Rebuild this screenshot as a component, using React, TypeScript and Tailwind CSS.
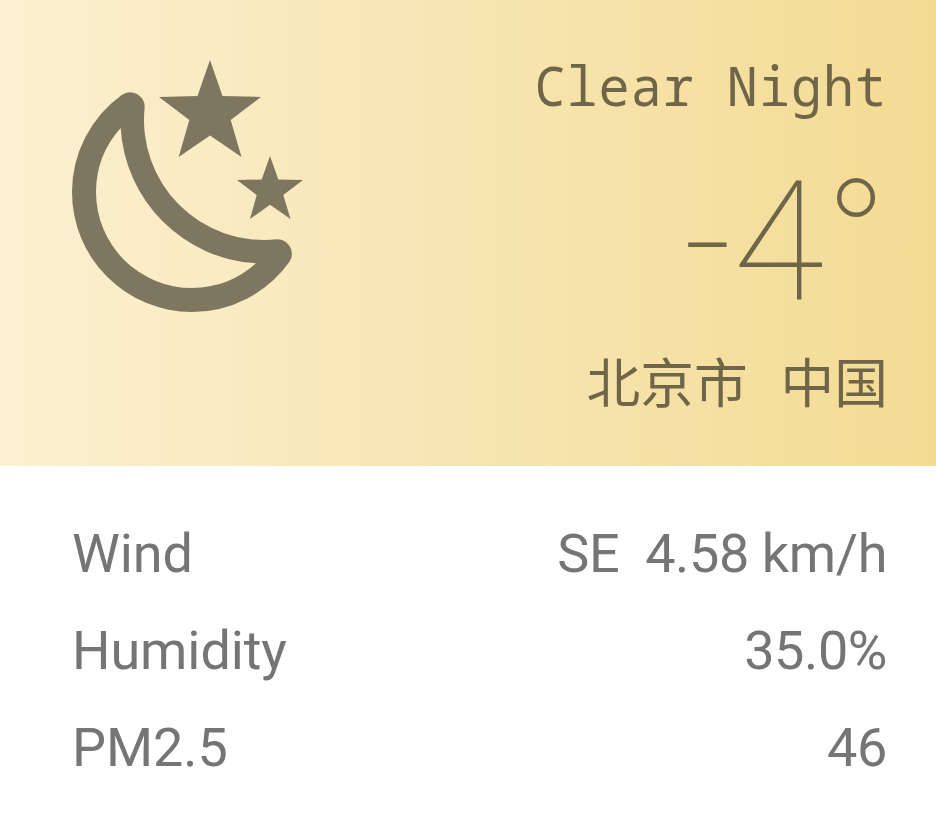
const rows = [
  { label: "Wind", value: "SE\u00a0 4.58 km/h" },
  { label: "Humidity", value: "35.0%" },
  { label: "PM2.5", value: "46" },
];

function NightIcon() {
  return (
    <svg width="240" height="256" viewBox="68 60 240 256" fill="#7f7660" className="ml-[68px] mt-[60px] shrink-0">
      <path
        fillRule="evenodd"
        d="M121.700 95A14.600 14.600 0 0 1 144.700 107A120 120 0 0 0 277 239.300A14.600 14.600 0 0 1 289.500 261.800A120 120 0 0 1 192 312A120 120 0 0 1 72 192A120 120 0 0 1 121.700 95ZM120.700 128A96 96 0 0 0 96 192A96 96 0 0 0 192 288A96 96 0 0 0 256 263.300A144 144 0 0 1 120.700 128Z"
      />
      <path d="M210 60L222.500 96L261 97L230.700 120L241.500 157L210 135.500L178.700 157L189.300 120L159 97L197.500 96Z" />
      <path d="M270 156L278.300 179.500L303 180L283.300 195L290.500 219L270 204.700L250 219L256.700 195L237 180L261.700 179.500Z" />
    </svg>
  );
}

export default function App() {
  return (
    <main className="h-[829px] w-[936px] overflow-hidden bg-white font-[Roboto,sans-serif]">
      <section className="flex h-[466px] justify-between bg-linear-to-r from-[#fbf0d0] to-[#f3db93] text-[#706548]">
        <NightIcon />
        <div className="mr-[49px] flex flex-col items-end whitespace-pre">
          <div className="mt-[47px] h-[76px] origin-right scale-x-[0.94] font-['Noto_Sans_Mono','DejaVu_Sans_Mono',monospace] text-[55px] leading-[76px] tracking-[1.1px]">Clear Night</div>
          <div className="mr-[-1px] mt-[19.5px] h-[198px] text-[167px] font-thin leading-[198px]">-4°</div>
          <div className="mr-[-1px] mt-[1.5px] font-['Noto_Sans_CJK_SC',sans-serif] text-[53.7px] leading-[76px] [word-spacing:4.5px]">北京市  中国</div>
        </div>
      </section>
      <section className="flex flex-col pl-[72px] pr-[49px] pt-[39px] text-[54px] leading-[97px] text-[#757575]">
        {rows.map((r) => (
          <div key={r.label} className="flex justify-between">
            <span className="tracking-[-0.1px]">{r.label}</span>
            <span className="tracking-[-0.4px]">{r.value}</span>
          </div>
        ))}
      </section>
    </main>
  );
}
